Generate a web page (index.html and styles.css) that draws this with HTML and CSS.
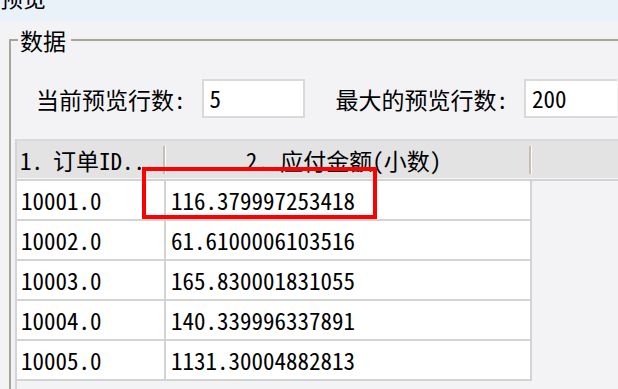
FILE: index.html
```html
<!DOCTYPE html>
<html lang="zh-CN">
<head>
<meta charset="utf-8">
<title>预览</title>
<link rel="stylesheet" href="styles.css">
</head>
<body>
  <div class="titlebar"><span class="title">预览</span></div>
  <fieldset class="group">
    <legend class="group-title">数据</legend>
    <div class="settings">
      <span class="label">当前预览行数:</span>
      <span class="input input-short">5</span>
      <span class="label">最大的预览行数:</span>
      <span class="input input-long">200</span>
    </div>
    <div class="grid">
      <div class="grid-header">
        <div class="hcell hc1">1.<span class="hname">订单ID..</span></div>
        <div class="sep"></div>
        <div class="hcell hc2">2. 应付金额(小数)</div>
        <div class="sep"></div>
      </div>
      <div class="row"><div class="cell c1">10001.0</div><div class="cell c2">116.379997253418</div></div>
      <div class="row"><div class="cell c1">10002.0</div><div class="cell c2">61.6100006103516</div></div>
      <div class="row"><div class="cell c1">10003.0</div><div class="cell c2">165.830001831055</div></div>
      <div class="row"><div class="cell c1">10004.0</div><div class="cell c2">140.339996337891</div></div>
      <div class="row"><div class="cell c1">10005.0</div><div class="cell c2">1131.30004882813</div></div>
    </div>
  </fieldset>
  <div class="highlight"></div>
</body>
</html>
```

FILE: styles.css
```css
html, body {
  margin: 0;
  padding: 0;
}
body {
  width: 618px;
  height: 389px;
  overflow: hidden;
  position: relative;
  background: #f3f3f5;
  color: #000;
  font-family: "Noto Sans Mono CJK SC", "Noto Sans CJK SC", monospace;
  font-size: 23px;
}
.titlebar {
  height: 21px;
  background: #eaf2f9;
  overflow: hidden;
}
.title {
  display: block;
  line-height: 23px;
  margin-top: -14px;
}
.group {
  box-sizing: border-box;
  margin: 7px 0 0 9px;
  padding: 0;
  min-width: 0;
  border: 2px solid #a8a49c;
  border-right: none;
  border-bottom: none;
  height: 361px;
}
.group-title {
  margin-left: 7px;
  padding: 0 5px 0 2px;
  line-height: 24px;
}
.settings {
  display: flex;
  align-items: center;
  margin: 27px 0 0 25px;
  white-space: nowrap;
}
.label {
  margin-right: 16px;
}
.input {
  box-sizing: border-box;
  height: 39px;
  line-height: 35px;
  padding-left: 6px;
  background: #fff;
  border: 2px solid #d9d9d9;
  flex: none;
}
.input-short {
  width: 103px;
  margin-right: 31px;
}
.input-long {
  width: 93px;
  border-right: none;
}
.grid {
  margin: 21px 0 0 4px;
  border-top: 2px solid #d9d9d9;
  border-left: 2px solid #d3d3d3;
  height: 248px;
  white-space: nowrap;
  overflow: hidden;
}
.grid-header {
  display: flex;
  align-items: center;
  height: 38px;
  background: #e3e3e3;
  border-bottom: 2px solid #d3d3d3;
  box-shadow: inset 0 -1px #f6f6f6;
}
.hcell {
  line-height: 38px;
  flex: none;
}
.hname {
  margin-left: 10px;
}
.hc1 {
  width: 146px;
  padding-left: 3px;
  box-sizing: border-box;
}
.hc2 {
  width: 363px;
  text-align: center;
  padding-right: 8px;
  box-sizing: border-box;
}
.sep {
  width: 2px;
  height: 28px;
  background: #c6beb2;
  border-right: 1px solid #fff;
  flex: none;
}
.row {
  display: flex;
  height: 40px;
}
.cell {
  box-sizing: border-box;
  height: 40px;
  line-height: 38px;
  background: #fff;
  border-right: 2px solid #d3d3d3;
  border-bottom: 2px solid #d3d3d3;
}
.c1 {
  width: 149px;
  padding-left: 4px;
}
.c2 {
  width: 366px;
  padding-left: 5px;
}
.highlight {
  position: absolute;
  left: 142px;
  top: 167px;
  width: 235px;
  height: 52px;
  box-sizing: border-box;
  border: 4px solid #ff0000;
}
```
